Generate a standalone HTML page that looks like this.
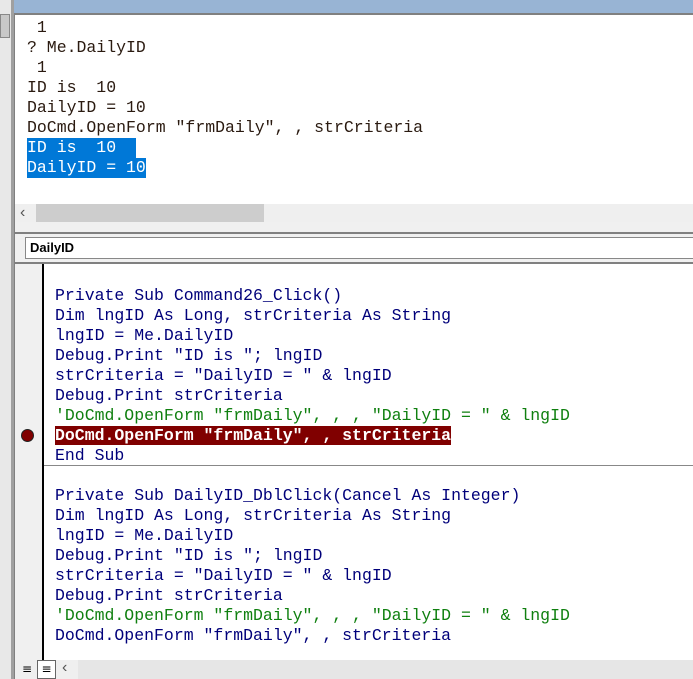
<!DOCTYPE html>
<html><head><style>
body{margin:0;width:693px;height:679px;overflow:hidden;background:#f0f0f0;position:relative;font-family:"Liberation Mono",monospace;}
.a{position:absolute}
.t{font-size:16.5px;line-height:20px;}
.t div{white-space:pre;height:20px}
.imm div{color:#2a1a10}
.code div{color:#00007a}
.code div.g{color:#108010}
</style></head><body>
<div class="a" style="left:0;top:0;width:11px;height:679px;background:#e8e8e8"></div>
<div class="a" style="left:0;top:14px;width:8px;height:22px;background:#c8c8c8;border:1px solid #888"></div>
<div class="a" style="left:11px;top:0;width:3px;height:679px;background:#a0a0a0"></div>
<div class="a" style="left:14px;top:0;width:679px;height:13px;background:#98b4d4"></div>
<div class="a" style="left:14px;top:13px;width:679px;height:2px;background:#808080"></div>
<div class="a" style="left:15px;top:15px;width:678px;height:189px;background:#fff"></div>
<div class="a" style="left:14px;top:15px;width:1px;height:217px;background:#808080"></div>
<div class="a" style="left:15px;top:204px;width:678px;height:18px;background:#efefef"></div>
<div class="a" style="left:20px;top:204px;font:16px 'Liberation Sans';color:#555">&lsaquo;</div>
<div class="a" style="left:36px;top:204px;width:228px;height:18px;background:#cdcdcd"></div>
<div class="a" style="left:14px;top:232px;width:679px;height:2px;background:#808080"></div>
<div class="a imm t" style="left:27px;top:18px"><div> 1</div><div>? Me.DailyID</div><div> 1</div><div>ID is  10</div><div>DailyID = 10</div><div>DoCmd.OpenForm "frmDaily", , strCriteria</div><div><span style="background:#0078d7;color:#fff;display:inline-block;width:109px">ID is  10</span></div><div><span style="background:#0078d7;color:#fff;display:inline-block;width:119px">DailyID = 10</span></div></div>
<div class="a" style="left:14px;top:234px;width:1px;height:445px;background:#808080"></div>
<div class="a" style="left:25px;top:237px;width:668px;height:22px;background:#fff;border:1px solid #888;border-right:none;font:bold 13px 'Liberation Sans';line-height:20px;color:#000;padding-left:4px;box-sizing:border-box">DailyID</div>
<div class="a" style="left:15px;top:262px;width:678px;height:2px;background:#808080"></div>
<div class="a" style="left:15px;top:264px;width:27px;height:396px;background:#f0f0f0"></div>
<div class="a" style="left:42px;top:264px;width:2px;height:396px;background:#000"></div>
<div class="a" style="left:44px;top:264px;width:649px;height:396px;background:#fff"></div>
<div class="a" style="left:44px;top:465px;width:649px;height:1px;background:#888"></div>
<div class="a" style="left:21px;top:429px;width:13px;height:13px;border-radius:50%;background:#800000;box-sizing:border-box;border:1px solid #222"></div>
<div class="a code t" style="left:55px;top:286px"><div>Private Sub Command26_Click()</div><div>Dim lngID As Long, strCriteria As String</div><div>lngID = Me.DailyID</div><div>Debug.Print "ID is "; lngID</div><div>strCriteria = "DailyID = " &amp; lngID</div><div>Debug.Print strCriteria</div><div class="g">'DoCmd.OpenForm "frmDaily", , , "DailyID = " &amp; lngID</div><div><span style="background:#800000;color:#fff;font-weight:bold">DoCmd.OpenForm "frmDaily", , strCriteria</span></div><div>End Sub</div><div> </div><div>Private Sub DailyID_DblClick(Cancel As Integer)</div><div>Dim lngID As Long, strCriteria As String</div><div>lngID = Me.DailyID</div><div>Debug.Print "ID is "; lngID</div><div>strCriteria = "DailyID = " &amp; lngID</div><div>Debug.Print strCriteria</div><div class="g">'DoCmd.OpenForm "frmDaily", , , "DailyID = " &amp; lngID</div><div>DoCmd.OpenForm "frmDaily", , strCriteria</div></div>
<div class="a" style="left:15px;top:660px;width:678px;height:19px;background:#efefef"></div>
<div class="a" style="left:18px;top:660px;width:18px;height:18px;font:12px 'DejaVu Sans';text-align:center;line-height:18px">&#8801;</div>
<div class="a" style="left:37px;top:660px;width:17px;height:17px;border:1px solid #666;background:#fff;font:12px 'DejaVu Sans';text-align:center;line-height:17px">&#8801;</div>
<div class="a" style="left:62px;top:659px;font:16px 'Liberation Sans';color:#555">&lsaquo;</div>
<div class="a" style="left:78px;top:660px;width:615px;height:19px;background:#e6e6e6"></div>
</body></html>
